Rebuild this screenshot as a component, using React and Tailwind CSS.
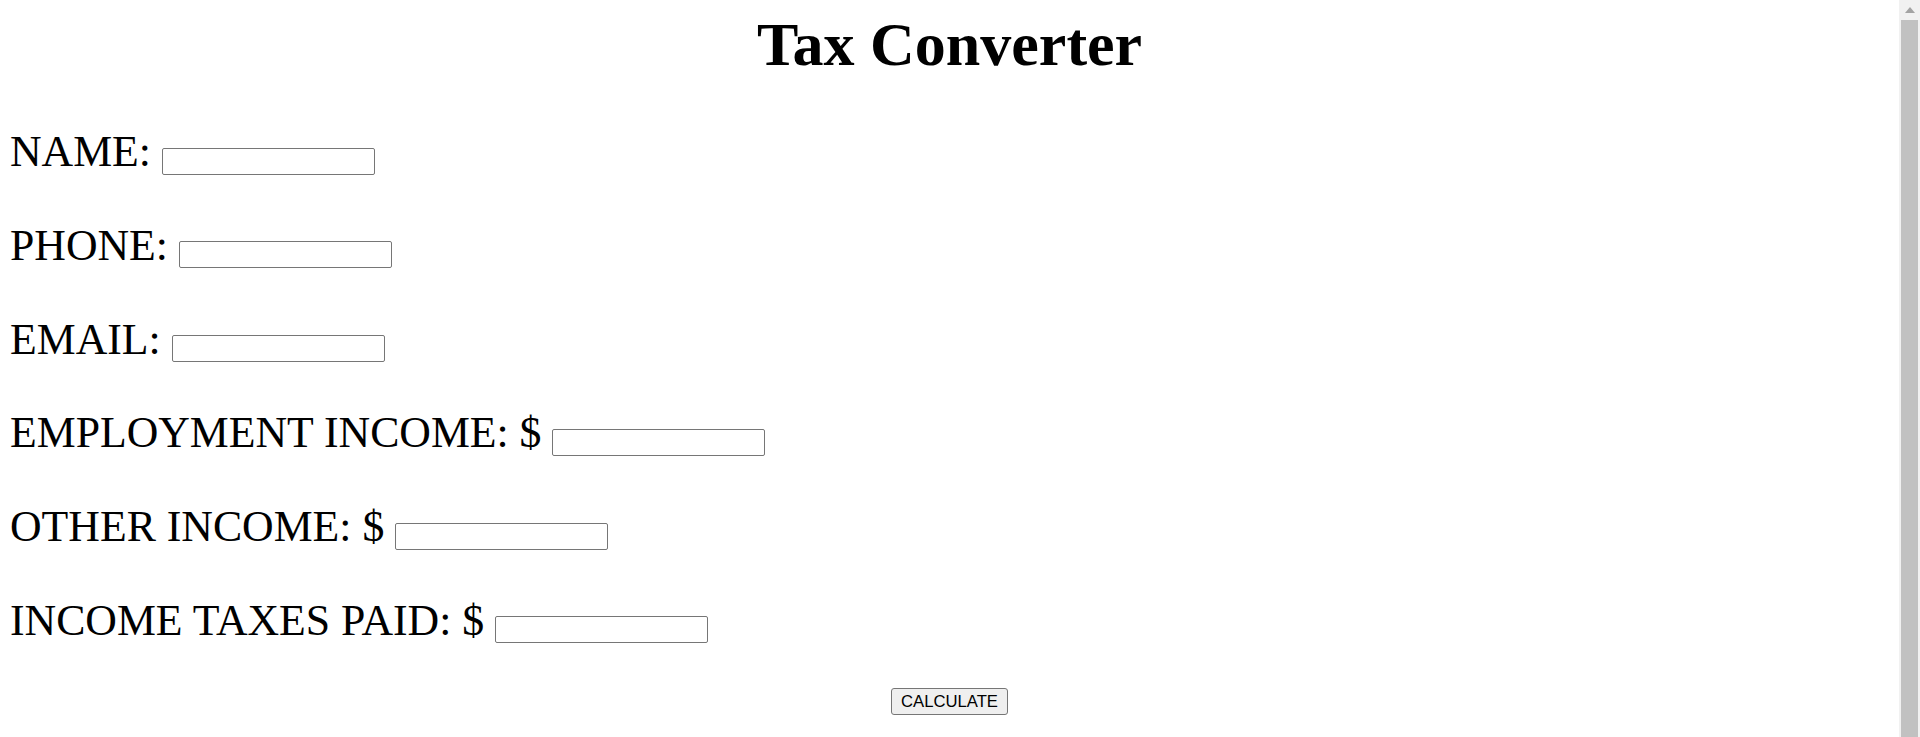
import React from "react";

const fields = [
  "NAME:",
  "PHONE:",
  "EMAIL:",
  "EMPLOYMENT INCOME: $",
  "OTHER INCOME: $",
  "INCOME TAXES PAID: $",
];

export default function App() {
  return (
    <div className="flex h-[737px] w-full overflow-hidden bg-white text-black">
      <div className="flex-1 p-[10px] font-['Liberation_Serif','Times_New_Roman',serif]">
        <h1 className="text-center text-[62px] font-bold leading-[69px]">Tax Converter</h1>
        <div className="mt-[47px] flex flex-col gap-[43.8px]">
          {fields.map((f) => (
            <div key={f} className="h-[50px] text-[43.75px] leading-[50px] whitespace-nowrap">
              {f}{" "}
              <input
                type="text"
                className="h-[27px] w-[213px] rounded-[2px] border border-[#767676] bg-white px-[2px] align-baseline font-['Liberation_Sans',Arial,sans-serif] text-[16.67px] outline-none"
              />
            </div>
          ))}
        </div>
        <div className="mt-[43px] flex justify-center">
          <button
            type="button"
            className="h-[27px] rounded-[3px] border border-[#767676] bg-[#efefef] px-[9px] font-['Liberation_Sans',Arial,sans-serif] text-[16.67px] leading-[19px] text-black"
          >
            CALCULATE
          </button>
        </div>
      </div>
      <div className="flex w-[21px] flex-col bg-[#f1f1f1]">
        <div className="flex h-[20px] items-start justify-center pt-[7px]">
          <svg width="10" height="6" viewBox="0 0 10 6">
            <polygon points="5,0 10,6 0,6" fill="#a3a3a3" />
          </svg>
        </div>
        <div className="mx-[2px] flex-1 bg-[#c1c1c1]" />
      </div>
    </div>
  );
}
